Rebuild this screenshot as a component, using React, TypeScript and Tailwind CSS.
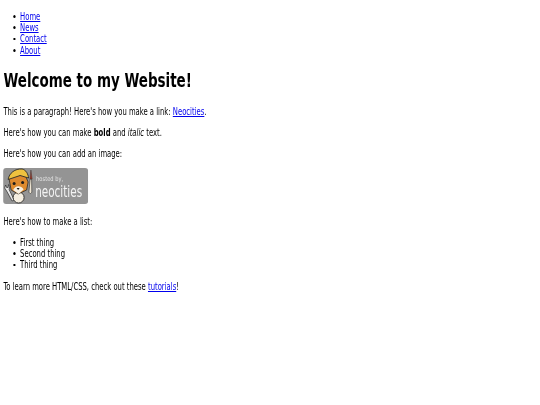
import React from "react";

const font = { fontFamily: '"DejaVu Sans Condensed", "DejaVu Sans", sans-serif' };

function Logo() {
  return (
    <svg width="109" height="36" viewBox="0 0 85 36" preserveAspectRatio="none" className="block">
      <rect x="0" y="0" width="85" height="36" rx="3" fill="#949494" />
      {/* wrench */}
      <path d="M2.5 17 L1.5 20 L3.5 23 L9 33 L11 32 L6 21.5 L6.5 18.5 L5.5 16.5 L5 19.5 L3.5 19.5Z" fill="#e8e8e8" stroke="#2c2c2c" strokeWidth="0.7" />
      {/* body */}
      <ellipse cx="15.5" cy="29.5" rx="5.5" ry="5.5" fill="#f5eee0" stroke="#2a2a2a" strokeWidth="0.9" />
      {/* head */}
      <path d="M6 11 L9 8 L22 7 L25 14 L23.5 22 L15 26 L8 22Z" fill="#dd8a2e" stroke="#2a2a2a" strokeWidth="0.8" />
      <path d="M10 22 C12 17 18 17 20.5 21.5 L15.5 26 Z" fill="#f7efe0" />
      <circle cx="11" cy="15.5" r="1.5" fill="#1c1c1c" />
      <circle cx="19.5" cy="14.5" r="1.5" fill="#1c1c1c" />
      <path d="M13.5 20 L16.5 20 L15 22Z" fill="#1c1c1c" />
      {/* helmet */}
      <path d="M5 11.5 C6 5 12 0.5 19 1 C23 2 25 6 25.5 10 L17 7.5 Z" fill="#eec23f" stroke="#2a2a2a" strokeWidth="0.9" />
      {/* brush */}
      <path d="M25.8 24 L27 11 L28.5 11 L28.7 24 C28 26 26.5 26 25.8 24Z" fill="#efe6d4" stroke="#2a2a2a" strokeWidth="0.6" />
      <path d="M26.8 11 L27.8 2 L29 11Z" fill="#a33a2a" stroke="#2a2a2a" strokeWidth="0.4" />
      <text x="33" y="13" fontSize="6.5" fill="#e2e2e2" fontFamily="DejaVu Sans Condensed" textLength="27" lengthAdjust="spacingAndGlyphs">hosted by,</text>
      <text transform="translate(32 28.5) scale(1 1.2)" x="0" y="0" fontSize="13" fill="#f4f4f4" fontFamily="DejaVu Sans Condensed" textLength="47" lengthAdjust="spacingAndGlyphs">neocities</text>
    </svg>
  );
}

const A = ({ children }: { children: React.ReactNode }) => (
  <a href="#" className="text-[#0000ee] underline">{children}</a>
);

const Item = ({ children }: { children: React.ReactNode }) => (
  <li className="flex items-center">
    <span className="w-[3.4px] h-[2.6px] rounded-full bg-black mr-[5.8px]" />
    <span>{children}</span>
  </li>
);

export default function App() {
  return (
    <div className="bg-white min-h-[405px] overflow-hidden">
      <div style={font} className="w-[692px] origin-top-left scale-x-[0.78] blur-[0.45px] pl-[4.4px] pt-[10.5px] text-[9.75px] leading-[11.4px] text-black">
        <ul className="list-none pl-[12.2px]">
          <Item><A>Home</A></Item>
          <Item><A>News</A></Item>
          <Item><A>Contact</A></Item>
          <Item><A>About</A></Item>
        </ul>
        <h1 className="text-[19.2px] leading-[23px] font-bold mt-[13px] mb-[13.5px]">Welcome to my Website!</h1>
        <p className="mb-[9.6px]">This is a paragraph! Here's how you make a link: <A>Neocities</A>.</p>
        <p className="mb-[9.6px]">Here's how you can make <b>bold</b> and <i>italic</i> text.</p>
        <p className="mb-[8.6px]">Here's how you can add an image:</p>
        <div className="mb-[12px]"><Logo /></div>
        <p className="mb-[9.6px]">Here's how to make a list:</p>
        <ul className="list-none pl-[12.2px] mb-[10px]">
          <Item>First thing</Item>
          <Item>Second thing</Item>
          <Item>Third thing</Item>
        </ul>
        <p>To learn more HTML/CSS, check out these <A>tutorials</A>!</p>
      </div>
    </div>
  );
}
